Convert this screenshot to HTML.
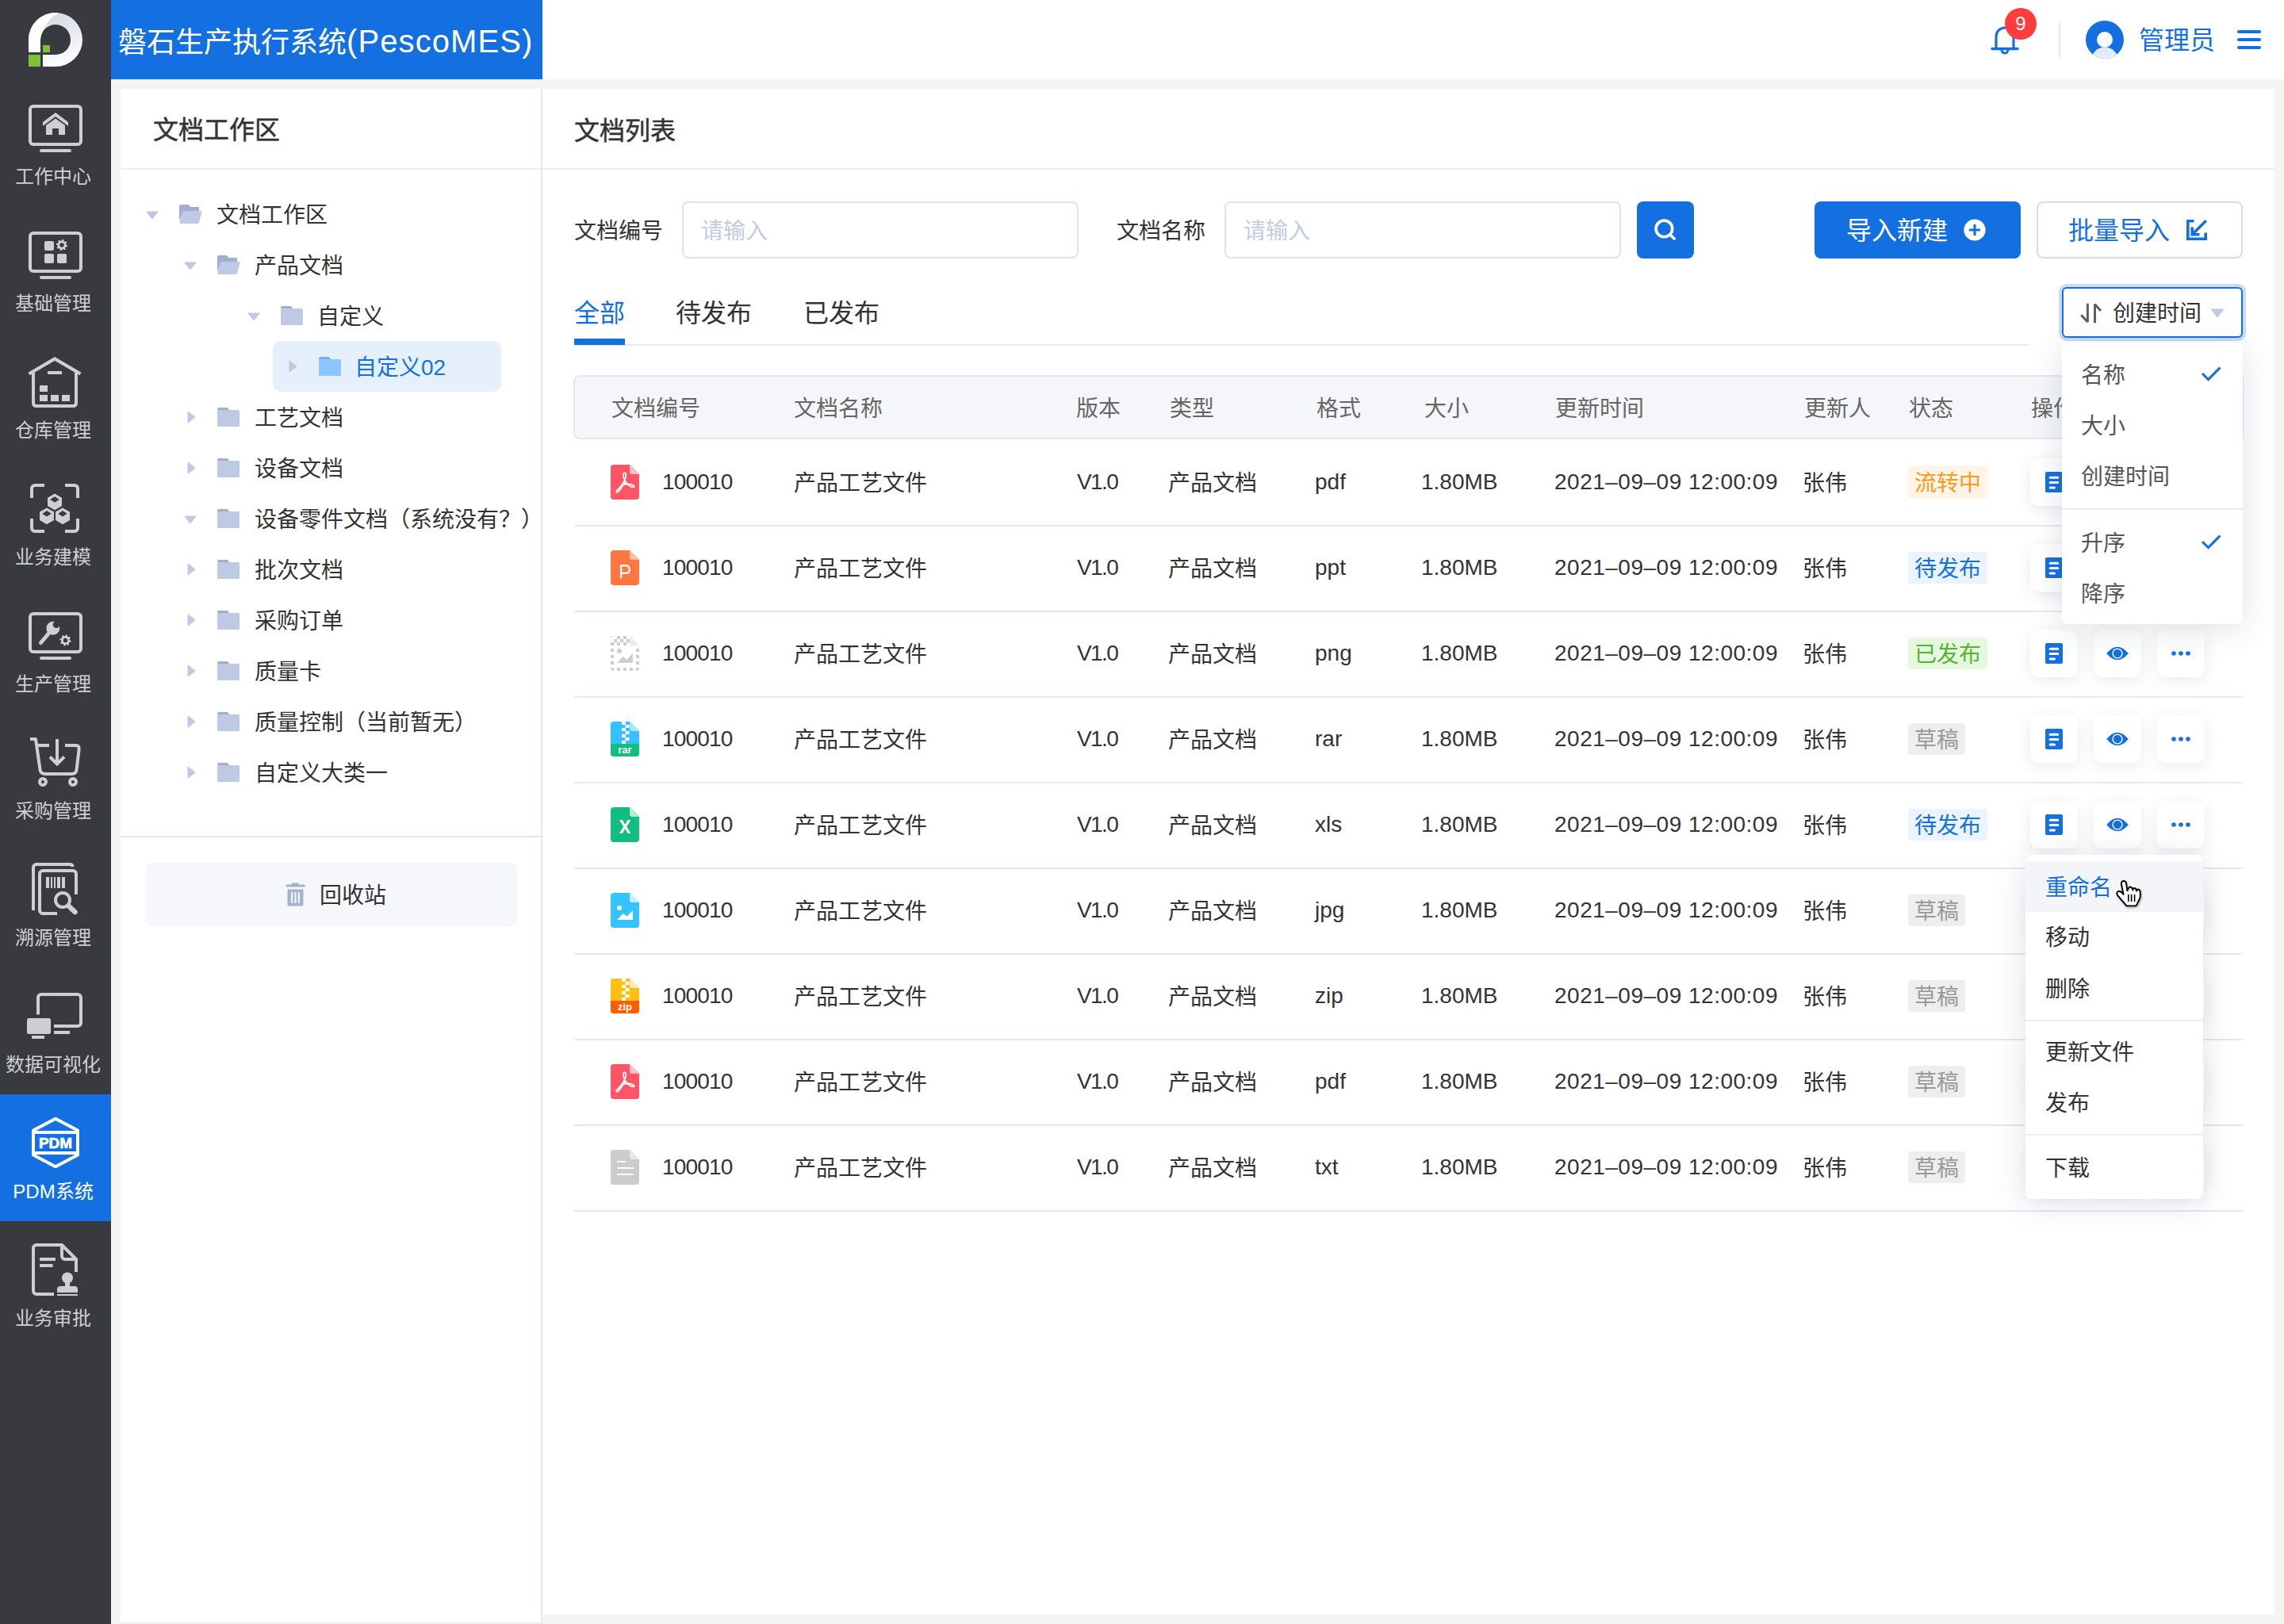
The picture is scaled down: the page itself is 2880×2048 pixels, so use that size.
<!DOCTYPE html>
<html lang="zh-CN"><head><meta charset="utf-8">
<style>
*{box-sizing:border-box;margin:0;padding:0}
html,body{width:2880px;height:2048px;overflow:hidden}
@media (max-width:2000px){html{zoom:0.5}}
body{position:relative;background:#f4f4f5;font-family:"Liberation Sans",sans-serif;color:#333;}
.a{position:absolute}
#side{left:0;top:0;width:140px;height:2048px;background:#393a40}
.nav{position:absolute;left:0;width:140px;height:160px}
.nav.on{background:#1470e0}
.nav svg{position:absolute;left:0;top:0}
.nav .lb{position:absolute;left:-3px;width:140px;text-align:center;top:103px;line-height:40px;font-size:24px;color:#cfcfcf;white-space:nowrap}
.nav.on .lb{color:#fff}
#hdr{left:140px;top:0;width:2740px;height:100px;background:#fff}
#title{left:140px;top:0;width:544px;height:100px;background:#1470e0;color:#fff;font-size:36px;line-height:104px;padding-left:9px;white-space:nowrap}
#title span{font-size:40px;letter-spacing:1.1px}
#lp{left:152px;top:112px;width:532px;height:1936px;background:#fff;border-right:2px solid #e3e7ef;border-bottom:2px solid #eceef3}
#rp{left:684px;top:112px;width:2184px;height:1924px;background:#fff}
.hl{position:absolute;height:2px;background:#eceef4}
.ttl{position:absolute;font-size:32px;color:#333;line-height:42px;white-space:nowrap;-webkit-text-stroke:0.5px #333}
.tree{position:absolute;font-size:28px;color:#333;line-height:44px;height:40px;white-space:nowrap}
.cell{position:absolute;font-size:28px;color:#333;line-height:40px;height:40px;white-space:nowrap}
.tab{position:absolute;font-size:32px;color:#333;line-height:43px;height:40px;white-space:nowrap}
.inp{width:500px;height:72px;border:2px solid #dde3ee;border-radius:8px;background:#fff}
.ph{color:#c3cbe0}
.tag{position:absolute;height:40px;line-height:44px;padding:0 8px;font-size:28px;border-radius:4px;white-space:nowrap}
.ab{position:absolute;width:60px;height:60px;background:#fff;border-radius:10px;box-shadow:0 4px 18px rgba(40,60,100,0.10)}
.ab svg{position:absolute;left:0;top:0}
.menu{position:absolute;background:#fff;border-radius:6px;box-shadow:0 6px 40px rgba(30,40,70,0.14)}
</style></head>
<body>
<!-- SIDEBAR -->
<div id="side" class="a">
  <svg class="a" style="left:36px;top:16px" width="68" height="68" viewBox="0 0 68 68">
    <defs><linearGradient id="lg" x1="0.3" y1="0" x2="0.6" y2="1"><stop offset="0" stop-color="#d2d7e2"/><stop offset="1" stop-color="#ffffff"/></linearGradient></defs>
    <path fill="url(#lg)" d="M0 34 A34 34 0 1 1 34 68 L18 68 L18 53 L34 53 A19 19 0 1 0 15 34 L15 50 L0 50 Z"/>
    <path fill="#ffffff" d="M38.5 0.25 A34 34 0 0 0 0 34 V50 H15 V34 A19 19 0 0 1 16.8 26 Q23 8 38.5 0.25 Z"/>
    <rect x="0" y="53" width="15" height="15" fill="#7dc03a"/>
    <rect x="18" y="41" width="9" height="9" fill="#7dc03a"/>
  </svg>
<div class="nav" style="top:100px"><svg width="140" height="160" viewBox="0 0 140 160"><rect x="38" y="34" width="64" height="48" rx="4" fill="none" stroke="#cfcfcf" stroke-width="4"/><line x1="52" y1="90" x2="88" y2="90" stroke="#cfcfcf" stroke-width="4" stroke-linecap="round"/><path fill="#cfcfcf" d="M54 54 L70 42 L86 54 L86 59 L70 47 L54 59 Z"/><path fill="#cfcfcf" d="M58 58 L70 49.5 L82 58 V70 H74 V62 H66 V70 H58 Z"/></svg><div class="lb">工作中心</div></div>
<div class="nav" style="top:260px"><svg width="140" height="160" viewBox="0 0 140 160"><rect x="38" y="34" width="64" height="48" rx="4" fill="none" stroke="#cfcfcf" stroke-width="4"/><line x1="52" y1="90" x2="88" y2="90" stroke="#cfcfcf" stroke-width="4" stroke-linecap="round"/><rect x="20" y="44" width="12" height="12" rx="2" fill="#cfcfcf" transform="translate(36 0)"/><rect x="56" y="60" width="12" height="12" rx="2" fill="#cfcfcf"/><rect x="72" y="60" width="12" height="12" rx="2" fill="#cfcfcf"/><path fill="#cfcfcf" fill-rule="evenodd" d="M77.47 43.63 L78.71 41.83 L80.09 42.11 L80.55 44.24 L81.43 44.83 L83.57 44.43 L84.35 45.61 L83.17 47.43 L83.37 48.47 L85.17 49.71 L84.89 51.09 L82.76 51.55 L82.17 52.43 L82.57 54.57 L81.39 55.35 L79.57 54.17 L78.53 54.37 L77.29 56.17 L75.91 55.89 L75.45 53.76 L74.57 53.17 L72.43 53.57 L71.65 52.39 L72.83 50.57 L72.63 49.53 L70.83 48.29 L71.11 46.91 L73.24 46.45 L73.83 45.57 L73.43 43.43 L74.61 42.65 L76.43 43.83 Z M75.30 49.00 a2.70 2.70 0 1 0 5.40 0 a2.70 2.70 0 1 0 -5.40 0 Z"/></svg><div class="lb">基础管理</div></div>
<div class="nav" style="top:420px"><svg width="140" height="160" viewBox="0 0 140 160"><polyline points="36.5,51.5 69,32.5 101.5,51.5" fill="none" stroke="#cfcfcf" stroke-width="4.2"/><path fill="none" stroke="#cfcfcf" stroke-width="4" d="M42 50 V88 Q42 92 46 92 H92 Q96 92 96 88 V50"/><rect x="60" y="48" width="18" height="4" fill="#cfcfcf"/><rect x="50" y="66" width="10" height="8" fill="#cfcfcf"/><rect x="50" y="78" width="10" height="8" fill="#cfcfcf"/><rect x="64" y="78" width="10" height="8" fill="#cfcfcf"/><rect x="78" y="78" width="10" height="8" fill="#cfcfcf"/></svg><div class="lb">仓库管理</div></div>
<div class="nav" style="top:580px"><svg width="140" height="160" viewBox="0 0 140 160"><path fill="none" stroke="#cfcfcf" stroke-width="4" d="M40 48 V36 A4 4 0 0 1 44 32 H56 M82 32 H94 A4 4 0 0 1 98 36 V48 M40 74 V86 A4 4 0 0 0 44 90 H56 M82 90 H94 A4 4 0 0 0 98 86 V74"/><path fill="#cfcfcf" fill-rule="evenodd" stroke="#393a40" stroke-width="1.6" d="M59.0 59.5 L68.8 65.1 L68.8 76.5 L59.0 82.1 L49.2 76.5 L49.2 65.1 Z M54.7 67.8 L59.0 65.0 L63.3 67.8 L59.0 70.6 Z"/><path fill="#cfcfcf" fill-rule="evenodd" stroke="#393a40" stroke-width="1.6" d="M79.0 59.5 L88.8 65.1 L88.8 76.5 L79.0 82.1 L69.2 76.5 L69.2 65.1 Z M74.7 67.8 L79.0 65.0 L83.3 67.8 L79.0 70.6 Z"/><path fill="#cfcfcf" fill-rule="evenodd" stroke="#393a40" stroke-width="1.6" d="M69.0 41.6 L78.8 47.2 L78.8 58.5 L69.0 64.2 L59.2 58.5 L59.2 47.2 Z M64.7 49.9 L69.0 47.1 L73.3 49.9 L69.0 52.7 Z"/></svg><div class="lb">业务建模</div></div>
<div class="nav" style="top:740px"><svg width="140" height="160" viewBox="0 0 140 160"><rect x="38" y="34" width="64" height="48" rx="4" fill="none" stroke="#cfcfcf" stroke-width="4"/><line x1="52" y1="90" x2="88" y2="90" stroke="#cfcfcf" stroke-width="4" stroke-linecap="round"/><line x1="63" y1="57" x2="51.5" y2="70.5" stroke="#cfcfcf" stroke-width="5" stroke-linecap="round"/><path fill="#cfcfcf" fill-rule="evenodd" d="M58.3 52.3 a8.5 8.5 0 1 0 17 0 a8.5 8.5 0 1 0 -17 0 Z"/><circle cx="71" cy="47.8" r="4.3" fill="#393a40"/><path fill="#393a40" d="M67 40 L76 37 L79 46 L72 44 Z"/><path fill="#cfcfcf" fill-rule="evenodd" d="M81.97 62.13 L83.21 60.33 L84.59 60.61 L85.05 62.74 L85.93 63.33 L88.07 62.93 L88.85 64.11 L87.67 65.93 L87.87 66.97 L89.67 68.21 L89.39 69.59 L87.26 70.05 L86.67 70.93 L87.07 73.07 L85.89 73.85 L84.07 72.67 L83.03 72.87 L81.79 74.67 L80.41 74.39 L79.95 72.26 L79.07 71.67 L76.93 72.07 L76.15 70.89 L77.33 69.07 L77.13 68.03 L75.33 66.79 L75.61 65.41 L77.74 64.95 L78.33 64.07 L77.93 61.93 L79.11 61.15 L80.93 62.33 Z M79.80 67.50 a2.70 2.70 0 1 0 5.40 0 a2.70 2.70 0 1 0 -5.40 0 Z"/></svg><div class="lb">生产管理</div></div>
<div class="nav" style="top:900px"><svg width="140" height="160" viewBox="0 0 140 160"><path fill="none" stroke="#cfcfcf" stroke-width="4" stroke-linejoin="round" d="M38 32 H45 L50.5 70.5 Q51.3 76 57 76 H90.5 Q96 76 96.6 70.5 L99.6 45 Q100.2 40 95.5 40 H82"/><path fill="none" stroke="#cfcfcf" stroke-width="4" d="M47 40 H62"/><path fill="none" stroke="#cfcfcf" stroke-width="4" d="M72 32 V63 M63 54.5 L72 63.5 L81 54.5"/><circle cx="54" cy="86" r="4" fill="none" stroke="#cfcfcf" stroke-width="4"/><circle cx="92" cy="86" r="4" fill="none" stroke="#cfcfcf" stroke-width="4"/></svg><div class="lb">采购管理</div></div>
<div class="nav" style="top:1060px"><svg width="140" height="160" viewBox="0 0 140 160"><path fill="none" stroke="#cfcfcf" stroke-width="4" d="M42 88 V34 A4 4 0 0 1 46 30 H88 A4 4 0 0 1 92 33"/><path fill="none" stroke="#cfcfcf" stroke-width="4" d="M72 92 H54 A4 4 0 0 1 50 88 V42 A4 4 0 0 1 54 38 H92 A4 4 0 0 1 96 42 V68"/><rect x="58" y="46" width="4" height="14" fill="#cfcfcf"/><rect x="64" y="46" width="2" height="14" fill="#cfcfcf"/><rect x="68" y="46" width="2" height="14" fill="#cfcfcf"/><rect x="72" y="46" width="4" height="14" fill="#cfcfcf"/><rect x="78" y="46" width="4" height="14" fill="#cfcfcf"/><circle cx="79" cy="75" r="9" fill="none" stroke="#cfcfcf" stroke-width="4"/><line x1="86.5" y1="82.5" x2="94.5" y2="90" stroke="#cfcfcf" stroke-width="6.5" stroke-linecap="round"/></svg><div class="lb">溯源管理</div></div>
<div class="nav" style="top:1220px"><svg width="140" height="160" viewBox="0 0 140 160"><path fill="none" stroke="#cfcfcf" stroke-width="4" d="M48 59.5 V38 A4 4 0 0 1 52 34 H98 A4 4 0 0 1 102 38 V70 A4 4 0 0 1 98 74 H68"/><rect x="34" y="64" width="30" height="20" rx="2.5" fill="#cfcfcf"/><rect x="40" y="86" width="16" height="4" fill="#cfcfcf"/><rect x="68" y="80" width="20" height="4" fill="#cfcfcf"/></svg><div class="lb">数据可视化</div></div>
<div class="nav on" style="top:1380px"><svg width="140" height="160" viewBox="0 0 140 160"><path fill="none" stroke="#fff" stroke-width="4" stroke-linejoin="round" d="M70 30.8 L98 45.6 V76.6 L70 91.2 L42 76.6 V45.6 Z"/><rect x="42" y="46" width="56" height="4" fill="#fff"/><rect x="42" y="72" width="56" height="4" fill="#fff"/><text x="49" y="68" textLength="42" lengthAdjust="spacingAndGlyphs" font-family="Liberation Sans" font-weight="bold" font-size="18.5" fill="#fff" stroke="#fff" stroke-width="0.7">PDM</text></svg><div class="lb">PDM系统</div></div>
<div class="nav" style="top:1540px"><svg width="140" height="160" viewBox="0 0 140 160"><path fill="none" stroke="#cfcfcf" stroke-width="4" stroke-linejoin="round" d="M68 92 H46 A4 4 0 0 1 42 88 V34 A4 4 0 0 1 46 30 H78 L96 48 V64"/><path fill="none" stroke="#cfcfcf" stroke-width="4" d="M78 30 V44 A4 4 0 0 0 82 48 H96"/><rect x="50" y="46" width="20" height="4" fill="#cfcfcf"/><rect x="50" y="54" width="16.5" height="4" fill="#cfcfcf"/><circle cx="85" cy="71.5" r="7" fill="#cfcfcf"/><rect x="82" y="75" width="6" height="9" fill="#cfcfcf"/><path fill="#cfcfcf" d="M72 90 V86 A4 4 0 0 1 76 82 H94 A4 4 0 0 1 98 86 V90 Z"/><rect x="72" y="92" width="26" height="2" fill="#cfcfcf"/></svg><div class="lb">业务审批</div></div>
</div>
<!-- HEADER -->
<div id="hdr" class="a"></div>
<div id="title" class="a">磐石生产执行系统<span>(PescoMES)</span></div>
<!-- LEFT PANEL -->
<div id="lp" class="a"></div>
<div class="ttl" style="left:193px;top:143px">文档工作区</div>
<div class="hl" style="left:152px;top:212px;width:530px"></div>
<svg class="a" style="left:184px;top:266px" width="16" height="11" viewBox="0 0 16 11"><path d="M1 0.5 H15 Q16 0.5 15.3 1.5 L8.8 9.8 Q8 10.6 7.2 9.8 L0.7 1.5 Q0 0.5 1 0.5 Z" fill="#bec9e4"/></svg>
<svg class="a" style="left:226px;top:258px" width="29" height="24" viewBox="0 0 29 24"><path d="M0 2 Q0 0 2 0 H11 Q12 0 12.6 0.8 L14 3 H24 Q25 3 25 4 V8 H5 L0 21 Z" fill="#a2aed1"/><path d="M5.5 8 H27.5 Q29 8 28.6 9.4 L25 22.6 Q24.6 24 23 24 H1.6 Q0 24 0.4 22.6 L4 9.4 Q4.4 8 5.5 8 Z" fill="#bec9e4"/></svg>
<div class="tree" style="left:273px;top:250px;color:#333">文档工作区</div>
<svg class="a" style="left:232px;top:330px" width="16" height="11" viewBox="0 0 16 11"><path d="M1 0.5 H15 Q16 0.5 15.3 1.5 L8.8 9.8 Q8 10.6 7.2 9.8 L0.7 1.5 Q0 0.5 1 0.5 Z" fill="#bec9e4"/></svg>
<svg class="a" style="left:274px;top:322px" width="29" height="24" viewBox="0 0 29 24"><path d="M0 2 Q0 0 2 0 H11 Q12 0 12.6 0.8 L14 3 H24 Q25 3 25 4 V8 H5 L0 21 Z" fill="#a2aed1"/><path d="M5.5 8 H27.5 Q29 8 28.6 9.4 L25 22.6 Q24.6 24 23 24 H1.6 Q0 24 0.4 22.6 L4 9.4 Q4.4 8 5.5 8 Z" fill="#bec9e4"/></svg>
<div class="tree" style="left:321px;top:314px;color:#333">产品文档</div>
<svg class="a" style="left:312px;top:394px" width="16" height="11" viewBox="0 0 16 11"><path d="M1 0.5 H15 Q16 0.5 15.3 1.5 L8.8 9.8 Q8 10.6 7.2 9.8 L0.7 1.5 Q0 0.5 1 0.5 Z" fill="#bec9e4"/></svg>
<svg class="a" style="left:354px;top:386px" width="28" height="24" viewBox="0 0 28 24"><path d="M0 2 Q0 0 2 0 H12 Q13 0 13.6 0.8 L15 3 H0 Z" fill="#a2aed1"/><rect x="0" y="3" width="28" height="21" rx="1.5" fill="#bec9e4"/></svg>
<div class="tree" style="left:400px;top:378px;color:#333">自定义</div>
<div class="a" style="left:344px;top:430px;width:288px;height:64px;background:#e6f0fc;border-radius:10px"></div>
<svg class="a" style="left:364px;top:454px" width="11" height="16" viewBox="0 0 11 16"><path d="M0.5 1 V15 Q0.5 16 1.5 15.3 L9.8 8.8 Q10.6 8 9.8 7.2 L1.5 0.7 Q0.5 0 0.5 1 Z" fill="#bec9e4"/></svg>
<svg class="a" style="left:402px;top:450px" width="28" height="24" viewBox="0 0 28 24"><path d="M0 2 Q0 0 2 0 H12 Q13 0 13.6 0.8 L15 3 H0 Z" fill="#6fb2f7"/><rect x="0" y="3" width="28" height="21" rx="1.5" fill="#8cc5ff"/></svg>
<div class="tree" style="left:447px;top:442px;color:#1470e0">自定义02</div>
<svg class="a" style="left:236px;top:518px" width="11" height="16" viewBox="0 0 11 16"><path d="M0.5 1 V15 Q0.5 16 1.5 15.3 L9.8 8.8 Q10.6 8 9.8 7.2 L1.5 0.7 Q0.5 0 0.5 1 Z" fill="#bec9e4"/></svg>
<svg class="a" style="left:274px;top:514px" width="28" height="24" viewBox="0 0 28 24"><path d="M0 2 Q0 0 2 0 H12 Q13 0 13.6 0.8 L15 3 H0 Z" fill="#a2aed1"/><rect x="0" y="3" width="28" height="21" rx="1.5" fill="#bec9e4"/></svg>
<div class="tree" style="left:321px;top:506px;color:#333">工艺文档</div>
<svg class="a" style="left:236px;top:582px" width="11" height="16" viewBox="0 0 11 16"><path d="M0.5 1 V15 Q0.5 16 1.5 15.3 L9.8 8.8 Q10.6 8 9.8 7.2 L1.5 0.7 Q0.5 0 0.5 1 Z" fill="#bec9e4"/></svg>
<svg class="a" style="left:274px;top:578px" width="28" height="24" viewBox="0 0 28 24"><path d="M0 2 Q0 0 2 0 H12 Q13 0 13.6 0.8 L15 3 H0 Z" fill="#a2aed1"/><rect x="0" y="3" width="28" height="21" rx="1.5" fill="#bec9e4"/></svg>
<div class="tree" style="left:321px;top:570px;color:#333">设备文档</div>
<svg class="a" style="left:232px;top:650px" width="16" height="11" viewBox="0 0 16 11"><path d="M1 0.5 H15 Q16 0.5 15.3 1.5 L8.8 9.8 Q8 10.6 7.2 9.8 L0.7 1.5 Q0 0.5 1 0.5 Z" fill="#bec9e4"/></svg>
<svg class="a" style="left:274px;top:642px" width="28" height="24" viewBox="0 0 28 24"><path d="M0 2 Q0 0 2 0 H12 Q13 0 13.6 0.8 L15 3 H0 Z" fill="#a2aed1"/><rect x="0" y="3" width="28" height="21" rx="1.5" fill="#bec9e4"/></svg>
<div class="tree" style="left:321px;top:634px;color:#333">设备零件文档（系统没有？）</div>
<svg class="a" style="left:236px;top:710px" width="11" height="16" viewBox="0 0 11 16"><path d="M0.5 1 V15 Q0.5 16 1.5 15.3 L9.8 8.8 Q10.6 8 9.8 7.2 L1.5 0.7 Q0.5 0 0.5 1 Z" fill="#bec9e4"/></svg>
<svg class="a" style="left:274px;top:706px" width="28" height="24" viewBox="0 0 28 24"><path d="M0 2 Q0 0 2 0 H12 Q13 0 13.6 0.8 L15 3 H0 Z" fill="#a2aed1"/><rect x="0" y="3" width="28" height="21" rx="1.5" fill="#bec9e4"/></svg>
<div class="tree" style="left:321px;top:698px;color:#333">批次文档</div>
<svg class="a" style="left:236px;top:774px" width="11" height="16" viewBox="0 0 11 16"><path d="M0.5 1 V15 Q0.5 16 1.5 15.3 L9.8 8.8 Q10.6 8 9.8 7.2 L1.5 0.7 Q0.5 0 0.5 1 Z" fill="#bec9e4"/></svg>
<svg class="a" style="left:274px;top:770px" width="28" height="24" viewBox="0 0 28 24"><path d="M0 2 Q0 0 2 0 H12 Q13 0 13.6 0.8 L15 3 H0 Z" fill="#a2aed1"/><rect x="0" y="3" width="28" height="21" rx="1.5" fill="#bec9e4"/></svg>
<div class="tree" style="left:321px;top:762px;color:#333">采购订单</div>
<svg class="a" style="left:236px;top:838px" width="11" height="16" viewBox="0 0 11 16"><path d="M0.5 1 V15 Q0.5 16 1.5 15.3 L9.8 8.8 Q10.6 8 9.8 7.2 L1.5 0.7 Q0.5 0 0.5 1 Z" fill="#bec9e4"/></svg>
<svg class="a" style="left:274px;top:834px" width="28" height="24" viewBox="0 0 28 24"><path d="M0 2 Q0 0 2 0 H12 Q13 0 13.6 0.8 L15 3 H0 Z" fill="#a2aed1"/><rect x="0" y="3" width="28" height="21" rx="1.5" fill="#bec9e4"/></svg>
<div class="tree" style="left:321px;top:826px;color:#333">质量卡</div>
<svg class="a" style="left:236px;top:902px" width="11" height="16" viewBox="0 0 11 16"><path d="M0.5 1 V15 Q0.5 16 1.5 15.3 L9.8 8.8 Q10.6 8 9.8 7.2 L1.5 0.7 Q0.5 0 0.5 1 Z" fill="#bec9e4"/></svg>
<svg class="a" style="left:274px;top:898px" width="28" height="24" viewBox="0 0 28 24"><path d="M0 2 Q0 0 2 0 H12 Q13 0 13.6 0.8 L15 3 H0 Z" fill="#a2aed1"/><rect x="0" y="3" width="28" height="21" rx="1.5" fill="#bec9e4"/></svg>
<div class="tree" style="left:321px;top:890px;color:#333">质量控制（当前暂无）</div>
<svg class="a" style="left:236px;top:966px" width="11" height="16" viewBox="0 0 11 16"><path d="M0.5 1 V15 Q0.5 16 1.5 15.3 L9.8 8.8 Q10.6 8 9.8 7.2 L1.5 0.7 Q0.5 0 0.5 1 Z" fill="#bec9e4"/></svg>
<svg class="a" style="left:274px;top:962px" width="28" height="24" viewBox="0 0 28 24"><path d="M0 2 Q0 0 2 0 H12 Q13 0 13.6 0.8 L15 3 H0 Z" fill="#a2aed1"/><rect x="0" y="3" width="28" height="21" rx="1.5" fill="#bec9e4"/></svg>
<div class="tree" style="left:321px;top:954px;color:#333">自定义大类一</div>
<div class="hl" style="left:152px;top:1054px;width:530px;background:#e3e8f2"></div>
<!-- RIGHT PANEL -->
<div id="rp" class="a"></div>
<div class="ttl" style="left:724px;top:144px">文档列表</div>
<div class="hl" style="left:684px;top:212px;width:2184px"></div>
<svg class="a" style="left:2500px;top:0px" width="380" height="100" viewBox="2500 0 380 100">
<path d="M2517 61 V46 A11 11 0 0 1 2539 46 V61" fill="none" stroke="#1470e0" stroke-width="3.2"/>
<path d="M2512 61.5 H2544" stroke="#1470e0" stroke-width="3.4" stroke-linecap="round"/>
<path d="M2524 63 A4 4 0 0 0 2532 63" fill="none" stroke="#1470e0" stroke-width="3"/>
<circle cx="2548" cy="30" r="20" fill="#ff3d3d"/>
<rect x="2596" y="28" width="2" height="44" fill="#e6e9f2"/>
<defs><clipPath id="av"><circle cx="2654" cy="50" r="24"/></clipPath>
<linearGradient id="avg" x1="0" y1="0" x2="0" y2="1"><stop offset="0" stop-color="#dbe6f7"/><stop offset="1" stop-color="#ffffff"/></linearGradient></defs>
<circle cx="2654" cy="50" r="24" fill="#1470e0"/>
<g clip-path="url(#av)"><circle cx="2654" cy="77" r="17.5" fill="url(#avg)"/></g>
<circle cx="2654" cy="50" r="10" fill="#fafbfe"/>
<rect x="2821" y="38" width="30" height="4" rx="2" fill="#1470e0"/>
<rect x="2821" y="48" width="30" height="4" rx="2" fill="#1470e0"/>
<rect x="2821" y="58" width="30" height="4" rx="2" fill="#1470e0"/>
</svg>
<div class="a" style="left:2528px;top:10px;width:40px;height:40px;line-height:40px;text-align:center;color:#fff;font-size:24px">9</div>
<div class="a" style="left:2697px;top:30px;line-height:43px;font-size:32px;color:#1470e0;white-space:nowrap">管理员</div>
<div class="a" style="left:184px;top:1088px;width:468px;height:80px;background:#f5f7fa;border-radius:8px"></div>
<svg class="a" style="left:360px;top:1113px" width="25" height="30" viewBox="0 0 25 30">
<path d="M8.5 0.5 H15.5 Q16.5 0.5 16.5 1.5 V2.5 H23.5 Q24.5 2.5 24.5 3.5 V5.5 H0.5 V3.5 Q0.5 2.5 1.5 2.5 H7.5 V1.5 Q7.5 0.5 8.5 0.5 Z" fill="#a3b1d3"/>
<path d="M2.5 8.5 H22.5 V28 Q22.5 29.5 21 29.5 H4 Q2.5 29.5 2.5 28 Z" fill="#a3b1d3"/>
<rect x="7" y="12" width="2.2" height="14" fill="#f5f7fa"/><rect x="11.4" y="12" width="2.2" height="14" fill="#f5f7fa"/><rect x="15.8" y="12" width="2.2" height="14" fill="#f5f7fa"/>
</svg>
<div class="tree" style="left:403px;top:1108px">回收站</div>
<div class="tree" style="left:724px;top:270px">文档编号</div>
<div class="a inp" style="left:860px;top:254px"></div><div class="tree ph" style="left:884px;top:270px">请输入</div>
<div class="tree" style="left:1408px;top:270px">文档名称</div>
<div class="a inp" style="left:1544px;top:254px"></div><div class="tree ph" style="left:1568px;top:270px">请输入</div>
<div class="a" style="left:2064px;top:254px;width:72px;height:72px;background:#1470e0;border-radius:8px">
<svg class="a" style="left:0;top:0" width="72" height="72" viewBox="0 0 72 72"><circle cx="34.4" cy="34.4" r="10.3" fill="none" stroke="#fff" stroke-width="3.6"/><path d="M42 42 L47.2 47" stroke="#fff" stroke-width="3.6" stroke-linecap="round"/></svg></div>
<div class="a" style="left:2288px;top:254px;width:260px;height:72px;background:#1470e0;border-radius:8px"></div>
<div class="a" style="left:2328px;top:270px;line-height:43px;font-size:32px;color:#fff;white-space:nowrap">导入新建</div>
<svg class="a" style="left:2476px;top:276px" width="28" height="28" viewBox="0 0 28 28"><circle cx="14" cy="14" r="13.6" fill="#fff"/><path d="M7 14 H21 M14 7 V21" stroke="#1470e0" stroke-width="3.2"/></svg>
<div class="a" style="left:2568px;top:254px;width:260px;height:72px;border:2px solid #d5dcea;border-radius:8px;background:#fff"></div>
<div class="a" style="left:2608px;top:270px;line-height:43px;font-size:32px;color:#1470e0;white-space:nowrap">批量导入</div>
<svg class="a" style="left:2754px;top:274px" width="32" height="32" viewBox="0 0 32 32"><path d="M12.5 4.8 H4.8 V27.2 H27.2 V19.5" fill="none" stroke="#1470e0" stroke-width="3.6"/><path d="M27.8 4.2 L11 21 M10.2 12.5 V21.8 H19.5" fill="none" stroke="#1470e0" stroke-width="3.6"/></svg>
<div class="a" style="left:724px;top:434px;width:1834px;height:2px;background:#e8ecf2"></div>
<div class="a" style="left:724px;top:427px;width:64px;height:8px;background:#1470e0"></div>
<div class="tab" style="left:724px;top:374px;color:#1470e0">全部</div>
<div class="tab" style="left:852px;top:374px">待发布</div>
<div class="tab" style="left:1013px;top:374px">已发布</div>
<div class="a" style="left:723px;top:473px;width:2106px;height:81px;background:#f4f6fa;border:2px solid #e3e8f0;border-radius:8px"></div>
<div class="tree" style="left:771px;top:494px;color:#666">文档编号</div>
<div class="tree" style="left:1001px;top:494px;color:#666">文档名称</div>
<div class="tree" style="left:1357px;top:494px;color:#666">版本</div>
<div class="tree" style="left:1475px;top:494px;color:#666">类型</div>
<div class="tree" style="left:1660px;top:494px;color:#666">格式</div>
<div class="tree" style="left:1796px;top:494px;color:#666">大小</div>
<div class="tree" style="left:1961px;top:494px;color:#666">更新时间</div>
<div class="tree" style="left:2275px;top:494px;color:#666">更新人</div>
<div class="tree" style="left:2407px;top:494px;color:#666">状态</div>
<div class="tree" style="left:2561px;top:494px;color:#666">操作</div>
<div class="a" style="left:724px;top:662px;width:2104px;height:2px;background:#e5e9f1"></div>
<svg class="a" style="left:770px;top:586px" width="36" height="44" viewBox="0 0 36 44"><path d="M4 0 H24 L36 12 V40 Q36 44 32 44 H4 Q0 44 0 40 V4 Q0 0 4 0 Z" fill="#fd5565"/><path d="M24 0 L36 12 H27 Q24 12 24 9 Z" fill="#ffc1c8"/><path fill="none" stroke="#fff" stroke-width="1.75" stroke-linejoin="round" stroke-linecap="round" d="M17.6 19.4 C15.3 14.8 15.2 10.3 17.6 10.3 C20 10.3 19.9 14.8 17.6 19.4 L15.9 23 C13.4 27.6 10.2 30.2 8.1 32.2 C6.3 34.1 7.6 35.6 9.3 34.3 C11.2 32.8 13.6 29.6 15.5 25.7 C19.2 24.3 23.6 24 27.4 25.6 C30.4 26.9 30.5 28.4 28.7 28.4 C25.8 28.4 22.6 26.2 20.3 23.6 Z M15.9 23 L20.3 23.6"/></svg>
<div class="cell" style="left:835px;top:588px;letter-spacing:-0.8px">100010</div>
<div class="tree" style="left:1001px;top:588px">产品工艺文件</div>
<div class="cell" style="left:1358px;top:588px;letter-spacing:-1.6px">V1.0</div>
<div class="tree" style="left:1473px;top:588px">产品文档</div>
<div class="cell" style="left:1658px;top:588px">pdf</div>
<div class="cell" style="left:1792px;top:588px">1.80MB</div>
<div class="cell" style="left:1960px;top:588px;letter-spacing:0.5px">2021–09–09 12:00:09</div>
<div class="tree" style="left:2273px;top:588px">张伟</div>
<div class="tag" style="left:2406px;top:588px;background:#fff4e5;color:#fa9a1e">流转中</div>
<div class="ab" style="left:2560px;top:578px"><svg width="60" height="60" viewBox="0 0 60 60"><rect x="19" y="17" width="22" height="26" rx="2" fill="#1470e0"/><rect x="23.7" y="22.7" width="12.6" height="3" rx="1.5" fill="#fff"/><rect x="23.7" y="29" width="12.6" height="3" rx="1.5" fill="#fff"/><rect x="23.7" y="35.5" width="8.3" height="3" rx="1.5" fill="#fff"/></svg></div>
<div class="ab" style="left:2640px;top:578px"><svg width="60" height="60" viewBox="0 0 60 60"><path d="M16.2 30 Q30 13.5 43.8 30 Q30 46.5 16.2 30 Z" fill="#1470e0"/><circle cx="30" cy="30" r="6.6" fill="#fff"/><circle cx="30" cy="30" r="5.2" fill="#1470e0"/></svg></div>
<div class="ab" style="left:2720px;top:578px"><svg width="60" height="60" viewBox="0 0 60 60"><circle cx="21" cy="30" r="2.8" fill="#1470e0"/><circle cx="30" cy="30" r="2.8" fill="#1470e0"/><circle cx="39" cy="30" r="2.8" fill="#1470e0"/></svg></div>
<div class="a" style="left:724px;top:770px;width:2104px;height:2px;background:#e5e9f1"></div>
<svg class="a" style="left:770px;top:694px" width="36" height="44" viewBox="0 0 36 44"><path d="M4 0 H24 L36 12 V40 Q36 44 32 44 H4 Q0 44 0 40 V4 Q0 0 4 0 Z" fill="#ff7643"/><path d="M24 0 L36 12 H27 Q24 12 24 9 Z" fill="#ffbca0"/><path fill="none" stroke="#fff" stroke-width="2.3" d="M13.1 35.2 V19.2 H18.5 C22 19.2 23.8 21 23.8 24 C23.8 27 22 28.9 18.5 28.9 H13.1"/></svg>
<div class="cell" style="left:835px;top:696px;letter-spacing:-0.8px">100010</div>
<div class="tree" style="left:1001px;top:696px">产品工艺文件</div>
<div class="cell" style="left:1358px;top:696px;letter-spacing:-1.6px">V1.0</div>
<div class="tree" style="left:1473px;top:696px">产品文档</div>
<div class="cell" style="left:1658px;top:696px">ppt</div>
<div class="cell" style="left:1792px;top:696px">1.80MB</div>
<div class="cell" style="left:1960px;top:696px;letter-spacing:0.5px">2021–09–09 12:00:09</div>
<div class="tree" style="left:2273px;top:696px">张伟</div>
<div class="tag" style="left:2406px;top:696px;background:#eaf3fe;color:#1470e0">待发布</div>
<div class="ab" style="left:2560px;top:686px"><svg width="60" height="60" viewBox="0 0 60 60"><rect x="19" y="17" width="22" height="26" rx="2" fill="#1470e0"/><rect x="23.7" y="22.7" width="12.6" height="3" rx="1.5" fill="#fff"/><rect x="23.7" y="29" width="12.6" height="3" rx="1.5" fill="#fff"/><rect x="23.7" y="35.5" width="8.3" height="3" rx="1.5" fill="#fff"/></svg></div>
<div class="ab" style="left:2640px;top:686px"><svg width="60" height="60" viewBox="0 0 60 60"><path d="M16.2 30 Q30 13.5 43.8 30 Q30 46.5 16.2 30 Z" fill="#1470e0"/><circle cx="30" cy="30" r="6.6" fill="#fff"/><circle cx="30" cy="30" r="5.2" fill="#1470e0"/></svg></div>
<div class="ab" style="left:2720px;top:686px"><svg width="60" height="60" viewBox="0 0 60 60"><circle cx="21" cy="30" r="2.8" fill="#1470e0"/><circle cx="30" cy="30" r="2.8" fill="#1470e0"/><circle cx="39" cy="30" r="2.8" fill="#1470e0"/></svg></div>
<div class="a" style="left:724px;top:878px;width:2104px;height:2px;background:#e5e9f1"></div>
<svg class="a" style="left:770px;top:802px" width="36" height="44" viewBox="0 0 36 44"><rect x="0" y="0" width="4" height="4" fill="#cccccc"/><rect x="8" y="0" width="4" height="4" fill="#cccccc"/><rect x="16" y="0" width="4" height="4" fill="#cccccc"/><rect x="4" y="4" width="4" height="4" fill="#cccccc"/><rect x="12" y="4" width="4" height="4" fill="#cccccc"/><rect x="20" y="4" width="4" height="4" fill="#cccccc"/><rect x="0" y="8" width="4" height="4" fill="#cccccc"/><rect x="8" y="8" width="4" height="4" fill="#cccccc"/><rect x="16" y="8" width="4" height="4" fill="#cccccc"/><rect x="0" y="16" width="4" height="4" fill="#cccccc"/><rect x="0" y="24" width="4" height="4" fill="#cccccc"/><rect x="0" y="32" width="4" height="4" fill="#cccccc"/><rect x="32" y="16" width="4" height="4" fill="#cccccc"/><rect x="32" y="24" width="4" height="4" fill="#cccccc"/><rect x="32" y="32" width="4" height="4" fill="#cccccc"/><rect x="8" y="40" width="4" height="4" fill="#cccccc"/><rect x="16" y="40" width="4" height="4" fill="#cccccc"/><rect x="24" y="40" width="4" height="4" fill="#cccccc"/><path d="M4 0 V4 H0 Q0 0 4 0 Z" fill="#fff"/><path d="M0 40 H4 V44 Q0 44 0 40 Z" fill="#cccccc"/><path d="M32 40 H36 Q36 44 32 44 Z" fill="#cccccc"/><path d="M24 0 L36 12 H24 Z" fill="#ececec"/><circle cx="11" cy="19" r="2.9" fill="#cccccc"/><path d="M8 33.7 L16 26 L20.3 30 L27.8 22 V33.7 Z" fill="#cccccc"/></svg>
<div class="cell" style="left:835px;top:804px;letter-spacing:-0.8px">100010</div>
<div class="tree" style="left:1001px;top:804px">产品工艺文件</div>
<div class="cell" style="left:1358px;top:804px;letter-spacing:-1.6px">V1.0</div>
<div class="tree" style="left:1473px;top:804px">产品文档</div>
<div class="cell" style="left:1658px;top:804px">png</div>
<div class="cell" style="left:1792px;top:804px">1.80MB</div>
<div class="cell" style="left:1960px;top:804px;letter-spacing:0.5px">2021–09–09 12:00:09</div>
<div class="tree" style="left:2273px;top:804px">张伟</div>
<div class="tag" style="left:2406px;top:804px;background:#e7f8e1;color:#52b72b">已发布</div>
<div class="ab" style="left:2560px;top:794px"><svg width="60" height="60" viewBox="0 0 60 60"><rect x="19" y="17" width="22" height="26" rx="2" fill="#1470e0"/><rect x="23.7" y="22.7" width="12.6" height="3" rx="1.5" fill="#fff"/><rect x="23.7" y="29" width="12.6" height="3" rx="1.5" fill="#fff"/><rect x="23.7" y="35.5" width="8.3" height="3" rx="1.5" fill="#fff"/></svg></div>
<div class="ab" style="left:2640px;top:794px"><svg width="60" height="60" viewBox="0 0 60 60"><path d="M16.2 30 Q30 13.5 43.8 30 Q30 46.5 16.2 30 Z" fill="#1470e0"/><circle cx="30" cy="30" r="6.6" fill="#fff"/><circle cx="30" cy="30" r="5.2" fill="#1470e0"/></svg></div>
<div class="ab" style="left:2720px;top:794px"><svg width="60" height="60" viewBox="0 0 60 60"><circle cx="21" cy="30" r="2.8" fill="#1470e0"/><circle cx="30" cy="30" r="2.8" fill="#1470e0"/><circle cx="39" cy="30" r="2.8" fill="#1470e0"/></svg></div>
<div class="a" style="left:724px;top:986px;width:2104px;height:2px;background:#e5e9f1"></div>
<svg class="a" style="left:770px;top:910px" width="36" height="44" viewBox="0 0 36 44"><path d="M4 0 H24 L36 12 V40 Q36 44 32 44 H4 Q0 44 0 40 V4 Q0 0 4 0 Z" fill="#33c2ff"/><path d="M24 0 L36 12 H27 Q24 12 24 9 Z" fill="#a8e6ff"/><path d="M0 28 H36 V40 Q36 44 32 44 H4 Q0 44 0 40 Z" fill="#12bd80"/><rect x="14.0" y="0" width="5" height="4" fill="#fff"/><rect x="18.5" y="4" width="5" height="4" fill="#fff"/><rect x="14.0" y="8" width="5" height="4" fill="#fff"/><rect x="18.5" y="12" width="5" height="4" fill="#fff"/><rect x="14.0" y="16" width="5" height="4" fill="#fff"/><rect x="18.5" y="20" width="5" height="4" fill="#fff"/><rect x="14.0" y="24" width="5" height="4" fill="#fff"/><rect x="18.5" y="0" width="0.01" height="28" fill="#fff"/><text x="18" y="40" text-anchor="middle" font-family="Liberation Sans" font-weight="bold" font-size="13" fill="#fff">rar</text></svg>
<div class="cell" style="left:835px;top:912px;letter-spacing:-0.8px">100010</div>
<div class="tree" style="left:1001px;top:912px">产品工艺文件</div>
<div class="cell" style="left:1358px;top:912px;letter-spacing:-1.6px">V1.0</div>
<div class="tree" style="left:1473px;top:912px">产品文档</div>
<div class="cell" style="left:1658px;top:912px">rar</div>
<div class="cell" style="left:1792px;top:912px">1.80MB</div>
<div class="cell" style="left:1960px;top:912px;letter-spacing:0.5px">2021–09–09 12:00:09</div>
<div class="tree" style="left:2273px;top:912px">张伟</div>
<div class="tag" style="left:2406px;top:912px;background:#eeeeee;color:#999999">草稿</div>
<div class="ab" style="left:2560px;top:902px"><svg width="60" height="60" viewBox="0 0 60 60"><rect x="19" y="17" width="22" height="26" rx="2" fill="#1470e0"/><rect x="23.7" y="22.7" width="12.6" height="3" rx="1.5" fill="#fff"/><rect x="23.7" y="29" width="12.6" height="3" rx="1.5" fill="#fff"/><rect x="23.7" y="35.5" width="8.3" height="3" rx="1.5" fill="#fff"/></svg></div>
<div class="ab" style="left:2640px;top:902px"><svg width="60" height="60" viewBox="0 0 60 60"><path d="M16.2 30 Q30 13.5 43.8 30 Q30 46.5 16.2 30 Z" fill="#1470e0"/><circle cx="30" cy="30" r="6.6" fill="#fff"/><circle cx="30" cy="30" r="5.2" fill="#1470e0"/></svg></div>
<div class="ab" style="left:2720px;top:902px"><svg width="60" height="60" viewBox="0 0 60 60"><circle cx="21" cy="30" r="2.8" fill="#1470e0"/><circle cx="30" cy="30" r="2.8" fill="#1470e0"/><circle cx="39" cy="30" r="2.8" fill="#1470e0"/></svg></div>
<div class="a" style="left:724px;top:1094px;width:2104px;height:2px;background:#e5e9f1"></div>
<svg class="a" style="left:770px;top:1018px" width="36" height="44" viewBox="0 0 36 44"><path d="M4 0 H24 L36 12 V40 Q36 44 32 44 H4 Q0 44 0 40 V4 Q0 0 4 0 Z" fill="#12bd80"/><path d="M24 0 L36 12 H27 Q24 12 24 9 Z" fill="#aef0c8"/><path fill="#fff" d="M11 16 H15 L18.2 22 L21.4 16 H25.4 L20.3 24.5 L25.4 33 H21.4 L18.2 27 L15 33 H11 L16.1 24.5 Z"/></svg>
<div class="cell" style="left:835px;top:1020px;letter-spacing:-0.8px">100010</div>
<div class="tree" style="left:1001px;top:1020px">产品工艺文件</div>
<div class="cell" style="left:1358px;top:1020px;letter-spacing:-1.6px">V1.0</div>
<div class="tree" style="left:1473px;top:1020px">产品文档</div>
<div class="cell" style="left:1658px;top:1020px">xls</div>
<div class="cell" style="left:1792px;top:1020px">1.80MB</div>
<div class="cell" style="left:1960px;top:1020px;letter-spacing:0.5px">2021–09–09 12:00:09</div>
<div class="tree" style="left:2273px;top:1020px">张伟</div>
<div class="tag" style="left:2406px;top:1020px;background:#eaf3fe;color:#1470e0">待发布</div>
<div class="ab" style="left:2560px;top:1010px"><svg width="60" height="60" viewBox="0 0 60 60"><rect x="19" y="17" width="22" height="26" rx="2" fill="#1470e0"/><rect x="23.7" y="22.7" width="12.6" height="3" rx="1.5" fill="#fff"/><rect x="23.7" y="29" width="12.6" height="3" rx="1.5" fill="#fff"/><rect x="23.7" y="35.5" width="8.3" height="3" rx="1.5" fill="#fff"/></svg></div>
<div class="ab" style="left:2640px;top:1010px"><svg width="60" height="60" viewBox="0 0 60 60"><path d="M16.2 30 Q30 13.5 43.8 30 Q30 46.5 16.2 30 Z" fill="#1470e0"/><circle cx="30" cy="30" r="6.6" fill="#fff"/><circle cx="30" cy="30" r="5.2" fill="#1470e0"/></svg></div>
<div class="ab" style="left:2720px;top:1010px"><svg width="60" height="60" viewBox="0 0 60 60"><circle cx="21" cy="30" r="2.8" fill="#1470e0"/><circle cx="30" cy="30" r="2.8" fill="#1470e0"/><circle cx="39" cy="30" r="2.8" fill="#1470e0"/></svg></div>
<div class="a" style="left:724px;top:1202px;width:2104px;height:2px;background:#e5e9f1"></div>
<svg class="a" style="left:770px;top:1126px" width="36" height="44" viewBox="0 0 36 44"><path d="M4 0 H24 L36 12 V40 Q36 44 32 44 H4 Q0 44 0 40 V4 Q0 0 4 0 Z" fill="#33c3ff"/><path d="M24 0 L36 12 H27 Q24 12 24 9 Z" fill="#c9efff"/><circle cx="11" cy="19" r="3" fill="#fff"/><path d="M8 34 L16 26 L20.5 29.7 L28 22 V34 Z" fill="#fff"/></svg>
<div class="cell" style="left:835px;top:1128px;letter-spacing:-0.8px">100010</div>
<div class="tree" style="left:1001px;top:1128px">产品工艺文件</div>
<div class="cell" style="left:1358px;top:1128px;letter-spacing:-1.6px">V1.0</div>
<div class="tree" style="left:1473px;top:1128px">产品文档</div>
<div class="cell" style="left:1658px;top:1128px">jpg</div>
<div class="cell" style="left:1792px;top:1128px">1.80MB</div>
<div class="cell" style="left:1960px;top:1128px;letter-spacing:0.5px">2021–09–09 12:00:09</div>
<div class="tree" style="left:2273px;top:1128px">张伟</div>
<div class="tag" style="left:2406px;top:1128px;background:#eeeeee;color:#999999">草稿</div>
<div class="ab" style="left:2560px;top:1118px"><svg width="60" height="60" viewBox="0 0 60 60"><rect x="19" y="17" width="22" height="26" rx="2" fill="#1470e0"/><rect x="23.7" y="22.7" width="12.6" height="3" rx="1.5" fill="#fff"/><rect x="23.7" y="29" width="12.6" height="3" rx="1.5" fill="#fff"/><rect x="23.7" y="35.5" width="8.3" height="3" rx="1.5" fill="#fff"/></svg></div>
<div class="ab" style="left:2640px;top:1118px"><svg width="60" height="60" viewBox="0 0 60 60"><path d="M16.2 30 Q30 13.5 43.8 30 Q30 46.5 16.2 30 Z" fill="#1470e0"/><circle cx="30" cy="30" r="6.6" fill="#fff"/><circle cx="30" cy="30" r="5.2" fill="#1470e0"/></svg></div>
<div class="ab" style="left:2720px;top:1118px"><svg width="60" height="60" viewBox="0 0 60 60"><circle cx="21" cy="30" r="2.8" fill="#1470e0"/><circle cx="30" cy="30" r="2.8" fill="#1470e0"/><circle cx="39" cy="30" r="2.8" fill="#1470e0"/></svg></div>
<div class="a" style="left:724px;top:1310px;width:2104px;height:2px;background:#e5e9f1"></div>
<svg class="a" style="left:770px;top:1234px" width="36" height="44" viewBox="0 0 36 44"><path d="M4 0 H24 L36 12 V40 Q36 44 32 44 H4 Q0 44 0 40 V4 Q0 0 4 0 Z" fill="#ffbe14"/><path d="M24 0 L36 12 H27 Q24 12 24 9 Z" fill="#ffeab8"/><path d="M0 28 H36 V40 Q36 44 32 44 H4 Q0 44 0 40 Z" fill="#f95f00"/><rect x="14.0" y="0" width="5" height="4" fill="#fff"/><rect x="18.5" y="4" width="5" height="4" fill="#fff"/><rect x="14.0" y="8" width="5" height="4" fill="#fff"/><rect x="18.5" y="12" width="5" height="4" fill="#fff"/><rect x="14.0" y="16" width="5" height="4" fill="#fff"/><rect x="18.5" y="20" width="5" height="4" fill="#fff"/><rect x="14.0" y="24" width="5" height="4" fill="#fff"/><rect x="18.5" y="0" width="0.01" height="28" fill="#fff"/><text x="18" y="40" text-anchor="middle" font-family="Liberation Sans" font-weight="bold" font-size="13" fill="#fff">zip</text></svg>
<div class="cell" style="left:835px;top:1236px;letter-spacing:-0.8px">100010</div>
<div class="tree" style="left:1001px;top:1236px">产品工艺文件</div>
<div class="cell" style="left:1358px;top:1236px;letter-spacing:-1.6px">V1.0</div>
<div class="tree" style="left:1473px;top:1236px">产品文档</div>
<div class="cell" style="left:1658px;top:1236px">zip</div>
<div class="cell" style="left:1792px;top:1236px">1.80MB</div>
<div class="cell" style="left:1960px;top:1236px;letter-spacing:0.5px">2021–09–09 12:00:09</div>
<div class="tree" style="left:2273px;top:1236px">张伟</div>
<div class="tag" style="left:2406px;top:1236px;background:#eeeeee;color:#999999">草稿</div>
<div class="ab" style="left:2560px;top:1226px"><svg width="60" height="60" viewBox="0 0 60 60"><rect x="19" y="17" width="22" height="26" rx="2" fill="#1470e0"/><rect x="23.7" y="22.7" width="12.6" height="3" rx="1.5" fill="#fff"/><rect x="23.7" y="29" width="12.6" height="3" rx="1.5" fill="#fff"/><rect x="23.7" y="35.5" width="8.3" height="3" rx="1.5" fill="#fff"/></svg></div>
<div class="ab" style="left:2640px;top:1226px"><svg width="60" height="60" viewBox="0 0 60 60"><path d="M16.2 30 Q30 13.5 43.8 30 Q30 46.5 16.2 30 Z" fill="#1470e0"/><circle cx="30" cy="30" r="6.6" fill="#fff"/><circle cx="30" cy="30" r="5.2" fill="#1470e0"/></svg></div>
<div class="ab" style="left:2720px;top:1226px"><svg width="60" height="60" viewBox="0 0 60 60"><circle cx="21" cy="30" r="2.8" fill="#1470e0"/><circle cx="30" cy="30" r="2.8" fill="#1470e0"/><circle cx="39" cy="30" r="2.8" fill="#1470e0"/></svg></div>
<div class="a" style="left:724px;top:1418px;width:2104px;height:2px;background:#e5e9f1"></div>
<svg class="a" style="left:770px;top:1342px" width="36" height="44" viewBox="0 0 36 44"><path d="M4 0 H24 L36 12 V40 Q36 44 32 44 H4 Q0 44 0 40 V4 Q0 0 4 0 Z" fill="#fd5565"/><path d="M24 0 L36 12 H27 Q24 12 24 9 Z" fill="#ffc1c8"/><path fill="none" stroke="#fff" stroke-width="1.75" stroke-linejoin="round" stroke-linecap="round" d="M17.6 19.4 C15.3 14.8 15.2 10.3 17.6 10.3 C20 10.3 19.9 14.8 17.6 19.4 L15.9 23 C13.4 27.6 10.2 30.2 8.1 32.2 C6.3 34.1 7.6 35.6 9.3 34.3 C11.2 32.8 13.6 29.6 15.5 25.7 C19.2 24.3 23.6 24 27.4 25.6 C30.4 26.9 30.5 28.4 28.7 28.4 C25.8 28.4 22.6 26.2 20.3 23.6 Z M15.9 23 L20.3 23.6"/></svg>
<div class="cell" style="left:835px;top:1344px;letter-spacing:-0.8px">100010</div>
<div class="tree" style="left:1001px;top:1344px">产品工艺文件</div>
<div class="cell" style="left:1358px;top:1344px;letter-spacing:-1.6px">V1.0</div>
<div class="tree" style="left:1473px;top:1344px">产品文档</div>
<div class="cell" style="left:1658px;top:1344px">pdf</div>
<div class="cell" style="left:1792px;top:1344px">1.80MB</div>
<div class="cell" style="left:1960px;top:1344px;letter-spacing:0.5px">2021–09–09 12:00:09</div>
<div class="tree" style="left:2273px;top:1344px">张伟</div>
<div class="tag" style="left:2406px;top:1344px;background:#eeeeee;color:#999999">草稿</div>
<div class="ab" style="left:2560px;top:1334px"><svg width="60" height="60" viewBox="0 0 60 60"><rect x="19" y="17" width="22" height="26" rx="2" fill="#1470e0"/><rect x="23.7" y="22.7" width="12.6" height="3" rx="1.5" fill="#fff"/><rect x="23.7" y="29" width="12.6" height="3" rx="1.5" fill="#fff"/><rect x="23.7" y="35.5" width="8.3" height="3" rx="1.5" fill="#fff"/></svg></div>
<div class="ab" style="left:2640px;top:1334px"><svg width="60" height="60" viewBox="0 0 60 60"><path d="M16.2 30 Q30 13.5 43.8 30 Q30 46.5 16.2 30 Z" fill="#1470e0"/><circle cx="30" cy="30" r="6.6" fill="#fff"/><circle cx="30" cy="30" r="5.2" fill="#1470e0"/></svg></div>
<div class="ab" style="left:2720px;top:1334px"><svg width="60" height="60" viewBox="0 0 60 60"><circle cx="21" cy="30" r="2.8" fill="#1470e0"/><circle cx="30" cy="30" r="2.8" fill="#1470e0"/><circle cx="39" cy="30" r="2.8" fill="#1470e0"/></svg></div>
<div class="a" style="left:724px;top:1526px;width:2104px;height:2px;background:#e5e9f1"></div>
<svg class="a" style="left:770px;top:1450px" width="36" height="44" viewBox="0 0 36 44"><path d="M4 0 H24 L36 12 V40 Q36 44 32 44 H4 Q0 44 0 40 V4 Q0 0 4 0 Z" fill="#cccccc"/><path d="M24 0 L36 12 H27 Q24 12 24 9 Z" fill="#e6e6e6"/><rect x="8" y="14" width="11" height="2" fill="#fff"/><rect x="8" y="22" width="21" height="2" fill="#fff"/><rect x="8" y="30" width="21" height="2" fill="#fff"/></svg>
<div class="cell" style="left:835px;top:1452px;letter-spacing:-0.8px">100010</div>
<div class="tree" style="left:1001px;top:1452px">产品工艺文件</div>
<div class="cell" style="left:1358px;top:1452px;letter-spacing:-1.6px">V1.0</div>
<div class="tree" style="left:1473px;top:1452px">产品文档</div>
<div class="cell" style="left:1658px;top:1452px">txt</div>
<div class="cell" style="left:1792px;top:1452px">1.80MB</div>
<div class="cell" style="left:1960px;top:1452px;letter-spacing:0.5px">2021–09–09 12:00:09</div>
<div class="tree" style="left:2273px;top:1452px">张伟</div>
<div class="tag" style="left:2406px;top:1452px;background:#eeeeee;color:#999999">草稿</div>
<div class="ab" style="left:2560px;top:1442px"><svg width="60" height="60" viewBox="0 0 60 60"><rect x="19" y="17" width="22" height="26" rx="2" fill="#1470e0"/><rect x="23.7" y="22.7" width="12.6" height="3" rx="1.5" fill="#fff"/><rect x="23.7" y="29" width="12.6" height="3" rx="1.5" fill="#fff"/><rect x="23.7" y="35.5" width="8.3" height="3" rx="1.5" fill="#fff"/></svg></div>
<div class="ab" style="left:2640px;top:1442px"><svg width="60" height="60" viewBox="0 0 60 60"><path d="M16.2 30 Q30 13.5 43.8 30 Q30 46.5 16.2 30 Z" fill="#1470e0"/><circle cx="30" cy="30" r="6.6" fill="#fff"/><circle cx="30" cy="30" r="5.2" fill="#1470e0"/></svg></div>
<div class="ab" style="left:2720px;top:1442px"><svg width="60" height="60" viewBox="0 0 60 60"><circle cx="21" cy="30" r="2.8" fill="#1470e0"/><circle cx="30" cy="30" r="2.8" fill="#1470e0"/><circle cx="39" cy="30" r="2.8" fill="#1470e0"/></svg></div>
<div class="a" style="left:2600px;top:362px;width:228px;height:64px;border:2px solid #1470e0;border-radius:6px;background:#fff;box-shadow:0 0 0 4px #cadcf5"></div>
<svg class="a" style="left:2620px;top:380px" width="34" height="30" viewBox="0 0 34 30"><path d="M12.4 2.7 V26 L4.2 17.2" fill="none" stroke="#5f5f5f" stroke-width="3" stroke-linejoin="bevel"/><path d="M21.5 27.3 V3.8 L29 12" fill="none" stroke="#5f5f5f" stroke-width="3" stroke-linejoin="bevel"/></svg>
<div class="tree" style="left:2664px;top:374px">创建时间</div>
<svg class="a" style="left:2787px;top:389px" width="18" height="12" viewBox="0 0 18 12"><path d="M1 1 H17 L9 11 Z" fill="#bfcae5" stroke="#bfcae5" stroke-width="1" stroke-linejoin="round"/></svg>
<div class="menu" style="left:2600px;top:432px;width:228px;height:355px"></div>
<div class="a" style="left:2828px;top:476px;width:1px;height:76px;background:#d5dbe6"></div>
<div class="tree" style="left:2624px;top:452px;color:#555">名称</div>
<svg class="a" style="left:2774px;top:460px" width="28" height="22" viewBox="0 0 28 22"><path d="M3 11 L10.5 18.5 L25.5 3.5" fill="none" stroke="#1470e0" stroke-width="3.1"/></svg>
<div class="tree" style="left:2624px;top:516px;color:#555">大小</div>
<div class="tree" style="left:2624px;top:580px;color:#555">创建时间</div>
<div class="tree" style="left:2624px;top:664px;color:#555">升序</div>
<svg class="a" style="left:2774px;top:672px" width="28" height="22" viewBox="0 0 28 22"><path d="M3 11 L10.5 18.5 L25.5 3.5" fill="none" stroke="#1470e0" stroke-width="3.1"/></svg>
<div class="tree" style="left:2624px;top:728px;color:#555">降序</div>
<div class="a" style="left:2600px;top:641px;width:228px;height:2px;background:#e8ecf3"></div>
<div class="menu" style="left:2554px;top:1078px;width:224px;height:434px;border-radius:8px"></div>
<div class="a" style="left:2554px;top:1086px;width:224px;height:64px;background:#f3f5f9"></div>
<div class="tree" style="left:2579px;top:1098px;color:#1470e0">重命名</div>
<div class="tree" style="left:2579px;top:1161px;color:#333">移动</div>
<div class="tree" style="left:2579px;top:1226px;color:#333">删除</div>
<div class="tree" style="left:2579px;top:1306px;color:#333">更新文件</div>
<div class="tree" style="left:2579px;top:1370px;color:#333">发布</div>
<div class="tree" style="left:2579px;top:1452px;color:#333">下载</div>
<div class="a" style="left:2554px;top:1286px;width:224px;height:2px;background:#e8ecf3"></div>
<div class="a" style="left:2554px;top:1430px;width:224px;height:2px;background:#e8ecf3"></div>
<svg class="a" style="left:2660px;top:1100px" width="46" height="50" viewBox="0 0 46 50">
<defs><filter id="ds" x="-20%" y="-20%" width="150%" height="150%"><feDropShadow dx="0.8" dy="1.4" stdDeviation="0.9" flood-color="#000" flood-opacity="0.35"/></filter></defs>
<path filter="url(#ds)" d="M17.6 11 C15.4 11 14.6 13 15 15.5 L17.6 28 C15.6 25.4 13.2 23.6 11 24.2 C9 24.8 8.8 27 10 28.8 L19.6 40.2 C20.4 41.6 21 42.4 22.6 42.4 L32.2 42.4 C33.4 42.4 34 41.6 34.5 40.6 L38 33.4 C38.8 31.6 38.9 29.4 38.8 27.4 L38.6 24.4 C38.4 21.8 36 20.6 34.4 22.6 L34 23.6 C33.6 20.4 31.6 19 29.8 20.6 L29.4 22.6 C29 19.6 26.6 17.4 24.4 19.4 L22.4 23.2 L21 13.6 C20.6 11.8 19.4 11 17.6 11 Z" fill="#fff" stroke="#000" stroke-width="1.9" stroke-linejoin="round"/>
<path d="M23.8 28.6 V36.4 M27.6 28.6 V36.4 M31.6 28.6 V36.4" stroke="#000" stroke-width="1.6" stroke-linecap="round"/>
</svg>
</body></html>
